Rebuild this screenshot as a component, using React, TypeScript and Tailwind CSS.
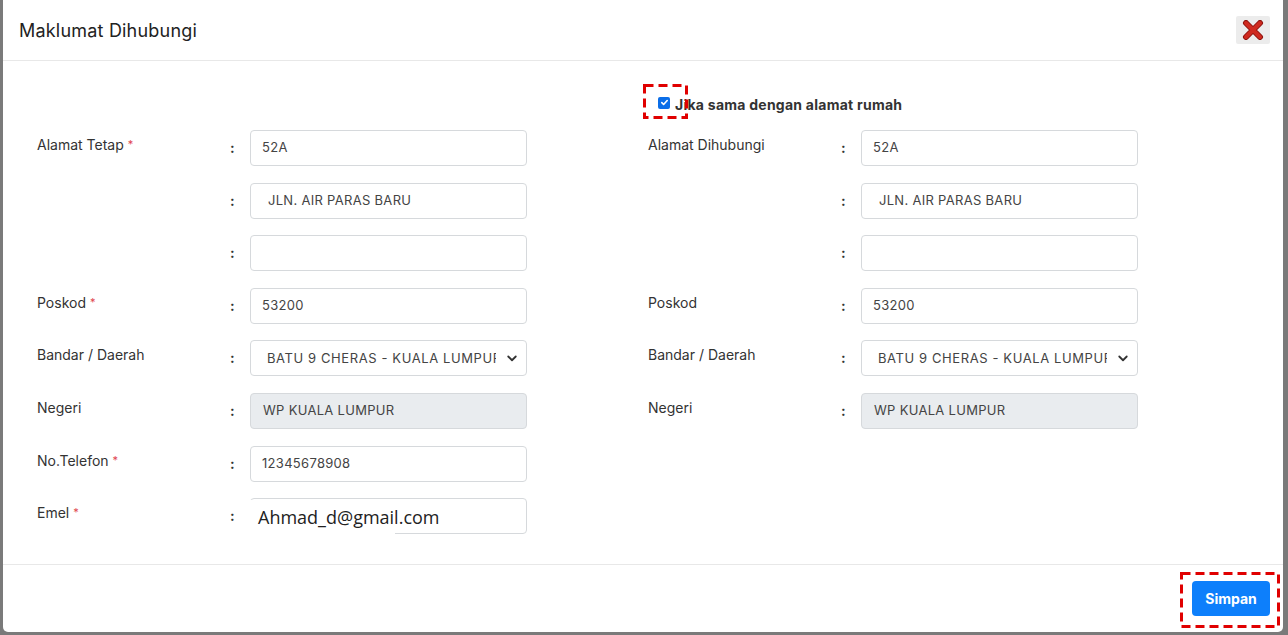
import React from "react";

const font = { fontFamily: "Inter, 'Noto Sans', sans-serif" };

function Label({ text, req }: { text: string; req?: boolean }) {
  return (
    <div className="w-[193px] shrink-0 text-[14px] text-[#333] leading-[35px] h-[35px] -mt-[3px]">
      {text}
      {req && <span className="text-[#e0454f] text-[11px] ml-[4px] relative top-[-2px]">*</span>}
    </div>
  );
}

function Colon() {
  return <div className="w-[20px] shrink-0 text-[14px] font-bold text-[#333] leading-[35px]">:</div>;
}

function Input({ value, pad = "pl-[11px]", disabled }: { value: string; pad?: string; disabled?: boolean }) {
  return (
    <div
      className={`w-[277px] h-[36px] rounded-[4px] border border-[#d6d9dc] ${disabled ? "bg-[#e9ecef]" : "bg-white"} ${pad} flex items-center text-[13px] tracking-[0.3px] text-[#444] whitespace-pre`}
    >
      {value}
    </div>
  );
}

function Select({ value }: { value: string }) {
  return (
    <div className="w-[277px] h-[36px] rounded-[4px] border border-[#d6d9dc] bg-white pl-[16px] pr-[8px] flex items-center text-[13px] tracking-[0.6px] text-[#444]">
      <div className="w-[229px] overflow-hidden whitespace-nowrap">{value}</div>
      <svg className="ml-auto" width="12" height="12" viewBox="0 0 16 16">
        <path d="M3 6l5 5 5-5" fill="none" stroke="#333" strokeWidth="2.4" strokeLinecap="round" strokeLinejoin="round" />
      </svg>
    </div>
  );
}

function Row({ label, req, children }: { label?: string; req?: boolean; children: React.ReactNode }) {
  return (
    <div className="flex items-start h-[36px]">
      <Label text={label ?? ""} req={req} />
      <Colon />
      {children}
    </div>
  );
}

function DashBox({ w, h, className }: { w: number; h: number; className: string }) {
  return (
    <svg className={`absolute ${className}`} width={w} height={h} viewBox={`0 0 ${w} ${h}`}>
      <rect x="1.5" y="1.5" width={w - 3} height={h - 3} fill="none" stroke="#e00000" strokeWidth="3" strokeDasharray="9 5" />
    </svg>
  );
}

export default function App() {
  return (
    <div className="w-[1288px] h-[635px] bg-[#7a7a7a] overflow-hidden relative" style={font}>
      <div className="absolute left-[3px] top-0 w-[1280px] h-[632px] bg-white rounded-b-[5px] flex flex-col">
        {/* header */}
        <div className="h-[61px] border-b border-[#e8e8e8] flex items-center pl-[16px] pr-[13px] shrink-0">
          <div className="text-[18px] text-[#222] tracking-[0.2px]">Maklumat Dihubungi</div>
          <div className="ml-auto w-[34px] h-[28px] bg-[#ececec] flex items-center justify-center rounded-[2px]">
            <svg width="22" height="20" viewBox="0 0 22 20">
              <path d="M4 3L18 17M18 3L4 17" stroke="#8d1510" strokeWidth="6" strokeLinecap="round" />
              <path d="M4 3L18 17M18 3L4 17" stroke="#cf2a1f" strokeWidth="4" strokeLinecap="round" />
            </svg>
          </div>
        </div>
        {/* body */}
        <div className="flex-1 pl-[34px] pt-[24px]">
          <div className="flex gap-[121px]">
            {/* left column */}
            <div className="w-[490px]">
              <div className="h-[45px]" />
              <div className="flex flex-col gap-[16.6px]">
                <Row label="Alamat Tetap" req><Input value="52A" /></Row>
                <Row><Input value=" JLN. AIR PARAS BARU" pad="pl-[13px]" /></Row>
                <Row><Input value="" /></Row>
                <Row label="Poskod" req><Input value="53200" /></Row>
                <Row label="Bandar / Daerah"><Select value="BATU 9 CHERAS - KUALA LUMPUR" /></Row>
                <Row label="Negeri"><Input value="WP KUALA LUMPUR" pad="pl-[12px]" disabled /></Row>
                <Row label="No.Telefon" req><Input value="12345678908" /></Row>
                <Row label="Emel" req>
                  <div className="relative">
                    <Input value="" />
                    <div className="absolute left-0 top-[2px] h-[34px] w-[145px] bg-white flex items-center pl-[8px] text-[18px] text-[#222] whitespace-nowrap" style={{ fontFamily: "'Open Sans', 'Noto Sans', sans-serif" }}>
                      Ahmad_d@gmail.com
                    </div>
                  </div>
                </Row>
              </div>
            </div>
            {/* right column */}
            <div className="w-[490px]">
              <div className="h-[45px] relative">
                <div className="flex items-center pl-[10px] pt-[9px] gap-[5px]">
                  <div className="w-[12px] h-[12px] rounded-[2px] bg-[#0b6ee8] flex items-center justify-center -mt-[4px]">
                    <svg width="9" height="9" viewBox="0 0 10 10">
                      <path d="M2 5.2l2 2 4-4.4" fill="none" stroke="white" strokeWidth="1.8" strokeLinecap="round" strokeLinejoin="round" />
                    </svg>
                  </div>
                  <div className="text-[14px] font-bold tracking-[0.25px] text-[#333]">Jika sama dengan alamat rumah</div>
                </div>
                <DashBox w={45} h={35} className="left-[-5px] top-[-1px]" />
              </div>
              <div className="flex flex-col gap-[16.6px]">
                <Row label="Alamat Dihubungi"><Input value="52A" /></Row>
                <Row><Input value=" JLN. AIR PARAS BARU" pad="pl-[13px]" /></Row>
                <Row><Input value="" /></Row>
                <Row label="Poskod"><Input value="53200" /></Row>
                <Row label="Bandar / Daerah"><Select value="BATU 9 CHERAS - KUALA LUMPUR" /></Row>
                <Row label="Negeri"><Input value="WP KUALA LUMPUR" pad="pl-[12px]" disabled /></Row>
              </div>
            </div>
          </div>
        </div>
        {/* footer */}
        <div className="h-[68px] border-t border-[#e8e8e8] shrink-0 flex items-start justify-end pr-[13px] pt-[16px]">
          <div className="relative">
            <button className="w-[78px] h-[35px] rounded-[4px] bg-[#0d7ffb] text-white text-[14px] font-bold">Simpan</button>
            <DashBox w={100} h={56} className="left-[-12px] top-[-9px]" />
          </div>
        </div>
      </div>
    </div>
  );
}
